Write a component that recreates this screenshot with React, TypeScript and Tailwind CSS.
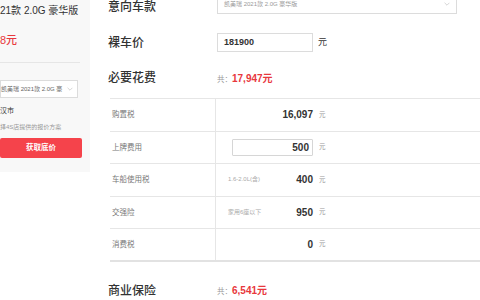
import React from 'react';

const FONT = { fontFamily: '"Liberation Sans", "Noto Sans CJK SC", sans-serif' };

const Chevron: React.FC<{ className?: string }> = ({ className }) => (
    <svg className={className} viewBox="0 0 10 6" fill="none" stroke="currentColor" strokeWidth="1">
        <path d="M1 1l4 4 4-4" />
    </svg>
);

type FeeRow = { label: string; hint?: string; value: string; editable?: boolean };

const fees: FeeRow[] = [
    { label: '购置税', value: '16,097' },
    { label: '上牌费用', value: '500', editable: true },
    { label: '车船使用税', hint: '1.6-2.0L(含)', value: '400' },
    { label: '交强险', hint: '家用6座以下', value: '950' },
    { label: '消费税', value: '0' },
];

const Sidebar: React.FC = () => (
    <div className="w-[90px] h-[172px] shrink-0 bg-[#f8f8f8] flex flex-col">
        <div className="h-[20px] flex items-center text-[10px] text-[#333] whitespace-nowrap">21款 2.0G 豪华版</div>
        <div className="mt-[12px] h-[16px] flex items-center text-[11px] text-[#e8383d] font-medium">8元</div>
        <div className="mt-[14px] w-[80px] border-t border-[#e6e6e6]" />
        <div className="mt-[17px] w-[78px] h-[18px] bg-white border border-[#dcdcdc] flex items-center justify-between pr-[4px]">
            <span className="text-[6px] text-[#666] whitespace-nowrap">凯美瑞 2021款 2.0G 豪</span>
            <Chevron className="w-[6px] h-[4px] text-[#bbb]" />
        </div>
        <div className="mt-[8px] h-[10px] flex items-center text-[7px] text-[#333]">汉市</div>
        <div className="mt-[6px] h-[10px] flex items-center text-[6px] text-[#999] whitespace-nowrap">择4S店提供的报价方案</div>
        <div className="mt-[6px] w-[82px] h-[20px] rounded-[2px] bg-[#f5434b] flex items-center justify-center text-[7.5px] font-bold text-white">获取底价</div>
    </div>
);

const SectionTitle: React.FC<{ children: React.ReactNode }> = ({ children }) => (
    <div className="w-[109px] shrink-0 text-[12px] font-medium text-[#333]">{children}</div>
);

const Total: React.FC<{ value: string }> = ({ value }) => (
    <div className="flex items-baseline">
        <span className="text-[7.5px] text-[#999]">共：</span>
        <span className="text-[10px] font-bold text-[#e8383d]">{value}</span>
    </div>
);

const App: React.FC = () => {
    return (
        <div className="w-[480px] h-[300px] overflow-hidden bg-white flex" style={FONT}>
            <Sidebar />

            <div className="flex-1 flex flex-col pl-[18px]">
                {/* top row is partly scrolled out of view */}
                <div className="h-[14px] flex items-start">
                    <div className="w-[109px] shrink-0 h-[14px] flex items-center text-[12px] font-medium text-[#333]">意向车款</div>
                    <div className="-mt-[6px] w-[240px] h-[20px] border border-[#dcdcdc] flex items-center justify-between pl-[6px] pr-[6px]">
                        <span className="text-[6px] text-[#999]">凯美瑞 2021款 2.0G 豪华版</span>
                        <Chevron className="w-[6px] h-[4px] text-[#bbb]" />
                    </div>
                </div>

                <div className="mt-[19px] h-[19px] flex items-center">
                    <SectionTitle>裸车价</SectionTitle>
                    <div className="w-[96px] h-[19px] border border-[#dcdcdc] flex items-center pl-[6px] text-[9px] font-bold text-[#333]">181900</div>
                    <span className="ml-[5px] text-[9px] text-[#333]">元</span>
                </div>

                <div className="mt-[18px] h-[16px] flex items-center">
                    <SectionTitle>必要花费</SectionTitle>
                    <Total value="17,947元" />
                </div>

                <div className="mt-[12px] ml-[2px] border-t border-[#e6e6e6]">
                    {fees.map((f, i) => (
                        <div
                            key={f.label}
                            className={
                                i === fees.length - 1
                                    ? 'h-[32.5px] flex border-b-2 border-[#e2e2e2]'
                                    : 'h-[32.5px] flex border-b border-[#e6e6e6]'
                            }
                        >
                            <div className="w-[106px] shrink-0 border-r border-[#e6e6e6] flex items-center pl-[2px] text-[7.5px] text-[#777]">
                                {f.label}
                            </div>
                            <div className="flex items-center">
                                <div className="w-[97px] flex items-center justify-between pl-[12px]">
                                    <span className="text-[6px] text-[#aaa] whitespace-nowrap">{f.hint ?? ''}</span>
                                    {f.editable ? (
                                        <div className="w-[81px] h-[17px] border border-[#d6d6d6] rounded-[1px] flex items-center justify-end pr-[3px] text-[10px] font-bold text-[#333]">
                                            {f.value}
                                        </div>
                                    ) : (
                                        <span className="text-[10px] font-bold text-[#333]">{f.value}</span>
                                    )}
                                </div>
                                <span className="ml-[6px] text-[6.5px] text-[#999]">元</span>
                            </div>
                        </div>
                    ))}
                </div>

                <div className="mt-[21px] h-[16px] flex items-center">
                    <SectionTitle>商业保险</SectionTitle>
                    <Total value="6,541元" />
                </div>
            </div>
        </div>
    );
};

export default App;
